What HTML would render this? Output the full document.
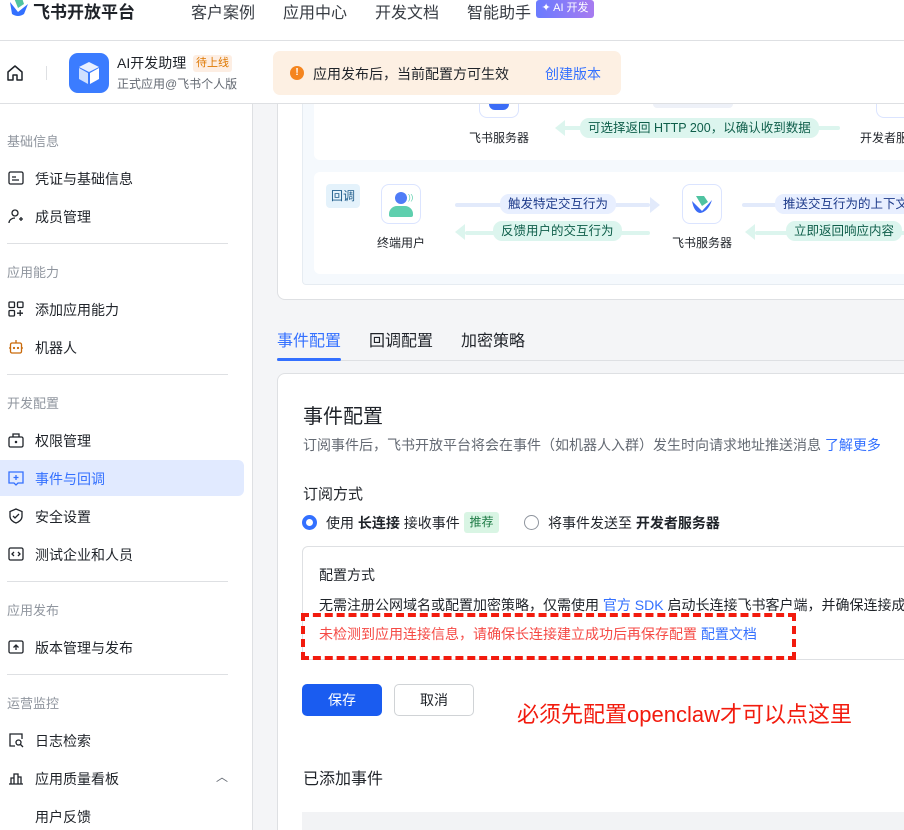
<!DOCTYPE html>
<html><head><meta charset="utf-8"><style>
*{margin:0;padding:0;box-sizing:border-box}
html{overflow:hidden;width:904px;height:830px}
body{width:904px;height:830px;overflow:hidden;position:relative;background:#f4f5f7;font-family:"Liberation Sans","Noto Sans CJK SC",sans-serif;color:#1f2329}
.a{position:absolute;white-space:nowrap}
.top{position:absolute;left:0;top:0;width:904px;height:41px;background:#fff;border-bottom:1px solid #dee0e3}
.hdr{position:absolute;left:0;top:41px;width:904px;height:63px;background:#fff;border-bottom:1px solid #dee0e3}
.side{position:absolute;left:0;top:104px;width:253px;height:726px;background:#fff;border-right:1px solid #dee0e3}
.lbl{font-size:13px;color:#8f959e;left:7px}
.it{font-size:14px;left:35px;color:#1f2329}
.dv{position:absolute;left:7px;width:221px;height:1px;background:#dee0e3}
.pill{position:absolute;height:18px;border-radius:9px;font-size:12px;line-height:18px;padding:0 8px;white-space:nowrap}
.bl{background:#e8efff;color:#1d3a8a}
.gr{background:#dcf5ee;color:#0e5e4a}
.ln{position:absolute;height:4px;border-radius:2px}
</style></head><body>
<div class="top">
 <svg class="a" style="left:8px;top:-2px" width="22" height="20" viewBox="0 0 22 20"><path d="M2 4 L10 14 L20 6 L16 16 Q10 20 4 16 Z" fill="#3370ff"/><path d="M6 0 L14 0 L16 6 L10 10 Z" fill="#4fc3a1"/></svg>
 <div class="a" style="left:33px;top:-2px;font-size:17px;font-weight:bold;color:#1f2329">飞书开放平台</div>
 <div class="a" style="left:191px;top:-1px;font-size:16px;color:#373c43">客户案例</div>
 <div class="a" style="left:283px;top:-1px;font-size:16px;color:#373c43">应用中心</div>
 <div class="a" style="left:375px;top:-1px;font-size:16px;color:#373c43">开发文档</div>
 <div class="a" style="left:467px;top:-1px;font-size:16px;color:#373c43">智能助手</div>
 <div class="a" style="left:536px;top:0;width:58px;height:18px;border-radius:3px;background:linear-gradient(90deg,#6a7bff,#a77bf0);color:#fff;font-size:11px;line-height:17px;text-align:center">✦ AI 开发</div>
</div>
<div class="hdr">
 <svg class="a" style="left:6px;top:23px" width="18" height="18" viewBox="0 0 18 18"><path d="M2 8 L9 2 L16 8 V16 H11 V11 H7 V16 H2 Z" fill="none" stroke="#1f2329" stroke-width="1.5" stroke-linejoin="round"/></svg>
 <div class="a" style="left:46px;top:25px;width:1px;height:14px;background:#dee0e3"></div>
 <div class="a" style="left:69px;top:12px;width:40px;height:40px;border-radius:9px;background:#3b7cff"></div>
 <svg class="a" style="left:77px;top:19px" width="24" height="26" viewBox="0 0 24 26"><path d="M12 2 L22 7 L12 12 L2 7 Z" fill="#e8f0ff"/><path d="M2 8 L11 13 V24 L2 19 Z" fill="#cfe0ff"/><path d="M22 8 L13 13 V24 L22 19 Z" fill="#fff"/></svg>
 <div class="a" style="left:117px;top:12px;font-size:14px">AI开发助理</div>
 <div class="a" style="left:193px;top:14px;width:39px;height:17px;border-radius:3px;background:#fdeee3;color:#de7802;font-size:11px;line-height:17px;text-align:center">待上线</div>
 <div class="a" style="left:117px;top:34px;font-size:12px;color:#646a73">正式应用@飞书个人版</div>
 <div class="a" style="left:273px;top:10px;width:348px;height:44px;border-radius:7px;background:#fdf0e3"></div>
 <div class="a" style="left:290px;top:25px;width:14px;height:14px;border-radius:7px;background:#f5851f;color:#fff;font-size:10px;line-height:14px;text-align:center;font-weight:bold">!</div>
 <div class="a" style="left:313px;top:23px;font-size:14px">应用发布后，当前配置方可生效</div>
 <div class="a" style="left:545px;top:23px;font-size:14px;color:#3370ff">创建版本</div>
</div>
<div class="side">
 <div class="a lbl" style="top:27px">基础信息</div>
 <div class="a it" style="top:65px">凭证与基础信息</div>
 <div class="a it" style="top:103px">成员管理</div>
 <div class="dv" style="top:139px"></div>
 <div class="a lbl" style="top:158px">应用能力</div>
 <div class="a it" style="top:196px">添加应用能力</div>
 <div class="a it" style="top:234px">机器人</div>
 <div class="dv" style="top:270px"></div>
 <div class="a lbl" style="top:289px">开发配置</div>
 <div class="a it" style="top:327px">权限管理</div>
 <div class="a" style="left:0;top:356px;width:244px;height:36px;border-radius:0 6px 6px 0;background:#e1eaff"></div>
 <div class="a it" style="top:365px;color:#3370ff">事件与回调</div>
 <div class="a it" style="top:403px">安全设置</div>
 <div class="a it" style="top:441px">测试企业和人员</div>
 <div class="dv" style="top:477px"></div>
 <div class="a lbl" style="top:496px">应用发布</div>
 <div class="a it" style="top:534px">版本管理与发布</div>
 <div class="dv" style="top:570px"></div>
 <div class="a lbl" style="top:589px">运营监控</div>
 <div class="a it" style="top:627px">日志检索</div>
 <div class="a it" style="top:665px">应用质量看板</div>
 <div class="a" style="left:216px;top:664px;font-size:12px;color:#646a73">︿</div>
 <div class="a it" style="top:703px">用户反馈</div>
 <svg class="a" style="left:8px;top:66px" width="16" height="16" viewBox="0 0 16 16" fill="none" stroke="#1f2329" stroke-width="1.3"><rect x="1" y="2" width="14" height="12" rx="1.5"/><path d="M4 7h4M4 10h7"/></svg>
 <svg class="a" style="left:8px;top:104px" width="16" height="16" viewBox="0 0 16 16" fill="none" stroke="#1f2329" stroke-width="1.3"><circle cx="7" cy="5" r="3"/><path d="M1 15c0-3 3-5 6-5M11 11h4M13 9v4"/></svg>
 <svg class="a" style="left:8px;top:197px" width="16" height="16" viewBox="0 0 16 16" fill="none" stroke="#1f2329" stroke-width="1.3"><rect x="1" y="1" width="5.5" height="5.5" rx="1"/><rect x="9.5" y="1" width="5.5" height="5.5" rx="1"/><rect x="1" y="9.5" width="5.5" height="5.5" rx="1"/><path d="M12.2 9v6M9 12.2h6"/></svg>
 <svg class="a" style="left:8px;top:235px" width="16" height="16" viewBox="0 0 16 16" fill="none" stroke="#c96a0a" stroke-width="1.3"><rect x="2.5" y="4" width="11" height="10" rx="1.5"/><path d="M8 1v3M1 9h1.5M13.5 9H15"/><circle cx="6" cy="9" r=".5" fill="#c96a0a"/><circle cx="10" cy="9" r=".5" fill="#c96a0a"/></svg>
 <svg class="a" style="left:8px;top:328px" width="16" height="16" viewBox="0 0 16 16" fill="none" stroke="#1f2329" stroke-width="1.3"><rect x="1" y="5" width="14" height="10" rx="1.5"/><path d="M5 5V2h6v3"/><circle cx="8" cy="10" r=".6" fill="#1f2329"/></svg>
 <svg class="a" style="left:8px;top:366px" width="16" height="16" viewBox="0 0 16 16" fill="none" stroke="#3370ff" stroke-width="1.3"><path d="M1 2h14v11h-5l-2 2-2-2H1z"/><path d="M8 5v5M5.5 7.5h5"/></svg>
 <svg class="a" style="left:8px;top:404px" width="16" height="16" viewBox="0 0 16 16" fill="none" stroke="#1f2329" stroke-width="1.3"><path d="M8 1l6 2.5v5c0 3-3 5.5-6 6.5-3-1-6-3.5-6-6.5v-5z"/><path d="M5 8l2 2 4-4"/></svg>
 <svg class="a" style="left:8px;top:442px" width="16" height="16" viewBox="0 0 16 16" fill="none" stroke="#1f2329" stroke-width="1.3"><rect x="1" y="2" width="14" height="12" rx="1.5"/><path d="M6 6L4 8l2 2M10 6l2 2-2 2"/></svg>
 <svg class="a" style="left:8px;top:535px" width="16" height="16" viewBox="0 0 16 16" fill="none" stroke="#1f2329" stroke-width="1.3"><rect x="1" y="2" width="14" height="12" rx="1.5"/><path d="M8 11V6M5.5 8.5L8 6l2.5 2.5"/></svg>
 <svg class="a" style="left:8px;top:628px" width="16" height="16" viewBox="0 0 16 16" fill="none" stroke="#1f2329" stroke-width="1.3"><path d="M7 14H2V2h12v5"/><circle cx="10.5" cy="10.5" r="2.5"/><path d="M12.5 12.5L15 15"/></svg>
 <svg class="a" style="left:8px;top:666px" width="16" height="16" viewBox="0 0 16 16" fill="none" stroke="#1f2329" stroke-width="1.3"><path d="M1 14h14M3 14V8h3v6M6 14V4h4v10M10 14V7h3v7"/></svg>
</div>
<!-- diagram card -->
<div class="a" style="left:277px;top:104px;width:640px;height:196px;background:#fff;border:1px solid #dee0e3;border-top:none;border-radius:0 0 8px 8px"></div>
<div class="a" style="left:302px;top:104px;width:620px;height:181px;background:#f5f9fd;border:1px solid #e6ecf2;border-top:none;border-radius:0 0 4px 4px"></div>
<div class="a" style="left:314px;top:104px;width:600px;height:56px;background:#fff;border-radius:0 0 6px 6px"></div>
<div class="a" style="left:314px;top:172px;width:600px;height:102px;background:#fff;border-radius:6px"></div>
<div class="a" style="left:479px;top:104px;width:40px;height:14px;background:#fff;border:1px solid #dbe4ff;border-top:none;border-radius:0 0 8px 8px"></div>
<div class="a" style="left:489px;top:104px;width:20px;height:6px;background:#3b6cf6;border-radius:0 0 10px 10px"></div>
<div class="a" style="left:469px;top:129px;font-size:12px">飞书服务器</div>
<div class="a" style="left:860px;top:129px;font-size:12px">开发者服</div>
<div class="a" style="left:876px;top:104px;width:40px;height:14px;background:#fff;border:1px solid #dbe4ff;border-top:none;border-radius:0 0 8px 8px"></div>
<div class="a" style="left:653px;top:104px;width:80px;height:4px;background:#eef1f8;border-radius:0 0 6px 6px"></div>
<div class="ln" style="left:560px;top:126px;width:280px;background:#dcf5ee"></div>
<div class="a" style="left:555px;top:120px;width:0;height:0;border-top:8px solid transparent;border-bottom:8px solid transparent;border-right:10px solid #dcf5ee"></div>
<div class="pill gr" style="left:580px;top:118px;height:20px;line-height:20px;font-size:12.5px">可选择返回 HTTP 200，以确认收到数据</div>
<div class="a" style="left:326px;top:184px;width:34px;height:24px;border-radius:4px;background:#e4f2fb;color:#1d5b8a;font-size:12px;line-height:24px;text-align:center">回调</div>
<div class="a" style="left:381px;top:184px;width:40px;height:40px;border-radius:8px;background:#fff;border:1px solid #dbe4ff"></div>
<div class="a" style="left:395px;top:192px;width:12px;height:12px;border-radius:6px;background:#4f7cf7"></div>
<div class="a" style="left:389px;top:206px;width:24px;height:11px;border-radius:8px 8px 2px 2px;background:#5ecfae"></div>
<div class="a" style="left:408px;top:193px;font-size:8px;color:#5ecfae">))</div>
<div class="a" style="left:377px;top:234px;font-size:12px">终端用户</div>
<div class="a" style="left:682px;top:184px;width:40px;height:40px;border-radius:8px;background:#fff;border:1px solid #dbe4ff"></div>
<svg class="a" style="left:690px;top:192px" width="24" height="24" viewBox="0 0 24 24"><path d="M2 9 L12 19 L22 8 Q18 20 10 21 Q4 20 2 9Z" fill="#3b6cf6"/><path d="M6 4 L14 4 L18 10 L12 14 Z" fill="#4fc3a1"/></svg>
<div class="a" style="left:672px;top:234px;font-size:12px">飞书服务器</div>
<div class="ln" style="left:455px;top:203px;width:195px;background:#e2eafb"></div>
<div class="a" style="left:650px;top:197px;border-top:8px solid transparent;border-bottom:8px solid transparent;border-left:10px solid #e2eafb"></div>
<div class="pill bl" style="left:500px;top:194px;height:20px;line-height:20px;font-size:12.5px">触发特定交互行为</div>
<div class="ln" style="left:465px;top:231px;width:185px;background:#dcf5ee"></div>
<div class="a" style="left:455px;top:224px;border-top:8px solid transparent;border-bottom:8px solid transparent;border-right:10px solid #dcf5ee"></div>
<div class="pill gr" style="left:493px;top:221px;height:20px;line-height:20px;font-size:12.5px">反馈用户的交互行为</div>
<div class="ln" style="left:742px;top:203px;width:170px;background:#e2eafb"></div>
<div class="pill bl" style="left:775px;top:194px;height:20px;line-height:20px;font-size:12.5px">推送交互行为的上下文</div>
<div class="ln" style="left:755px;top:231px;width:160px;background:#dcf5ee"></div>
<div class="a" style="left:745px;top:224px;border-top:8px solid transparent;border-bottom:8px solid transparent;border-right:10px solid #dcf5ee"></div>
<div class="pill gr" style="left:786px;top:221px;height:20px;line-height:20px;font-size:12.5px">立即返回响应内容</div>
<!-- tabs -->
<div class="a" style="left:277px;top:327px;font-size:16px;color:#3370ff">事件配置</div>
<div class="a" style="left:369px;top:327px;font-size:16px;color:#1f2329">回调配置</div>
<div class="a" style="left:461px;top:327px;font-size:16px;color:#1f2329">加密策略</div>
<div class="a" style="left:277px;top:360px;width:640px;height:1px;background:#dee0e3"></div>
<div class="a" style="left:277px;top:358px;width:64px;height:3px;background:#3370ff;border-radius:2px"></div>
<!-- main card -->
<div class="a" style="left:277px;top:373px;width:640px;height:470px;background:#fff;border:1px solid #dee0e3;border-radius:8px"></div>
<div class="a" style="left:303px;top:400px;font-size:20px">事件配置</div>
<div class="a" style="left:303px;top:435px;font-size:14px;color:#646a73">订阅事件后，飞书开放平台将会在事件（如机器人入群）发生时向请求地址推送消息 <span style="color:#3370ff">了解更多</span></div>
<div class="a" style="left:303px;top:483px;font-size:15px">订阅方式</div>
<div class="a" style="left:302px;top:515px;width:15px;height:15px;border-radius:8px;border:4px solid #3370ff;background:#fff"></div>
<div class="a" style="left:326px;top:513px;font-size:14px">使用 <b>长连接</b> 接收事件</div>
<div class="a" style="left:464px;top:512px;width:35px;height:21px;border-radius:3px;background:#d9f5e4;color:#1e7a45;font-size:12px;line-height:21px;text-align:center">推荐</div>
<div class="a" style="left:524px;top:515px;width:15px;height:15px;border-radius:8px;border:1px solid #8f959e;background:#fff"></div>
<div class="a" style="left:548px;top:513px;font-size:14px">将事件发送至 <b>开发者服务器</b></div>
<div class="a" style="left:302px;top:546px;width:620px;height:114px;border:1px solid #dee0e3;border-radius:6px"></div>
<div class="a" style="left:319px;top:565px;font-size:14px">配置方式</div>
<div class="a" style="left:319px;top:595px;font-size:14px">无需注册公网域名或配置加密策略，仅需使用 <span style="color:#3370ff">官方 SDK</span> 启动长连接飞书客户端，并确保连接成功</div>
<div class="a" style="left:319px;top:624px;font-size:14px;color:#f54a45">未检测到应用连接信息，请确保长连接建立成功后再保存配置 <span style="color:#3370ff">配置文档</span></div>
<div class="a" style="left:301px;top:613px;width:495px;height:47px;border:4px dashed #f21b0e"></div>
<div class="a" style="left:302px;top:684px;width:80px;height:32px;border-radius:5px;background:#1a5cf0;color:#fff;font-size:14px;line-height:32px;text-align:center">保存</div>
<div class="a" style="left:394px;top:684px;width:80px;height:32px;border-radius:5px;border:1px solid #d0d3d6;background:#fff;font-size:14px;line-height:30px;text-align:center">取消</div>
<div class="a" style="left:517px;top:697px;font-size:22px;color:#f21b0e">必须先配置openclaw才可以点这里</div>
<div class="a" style="left:303px;top:765px;font-size:16px">已添加事件</div>
<div class="a" style="left:302px;top:812px;width:620px;height:30px;background:#f2f3f5"></div>
</body></html>
